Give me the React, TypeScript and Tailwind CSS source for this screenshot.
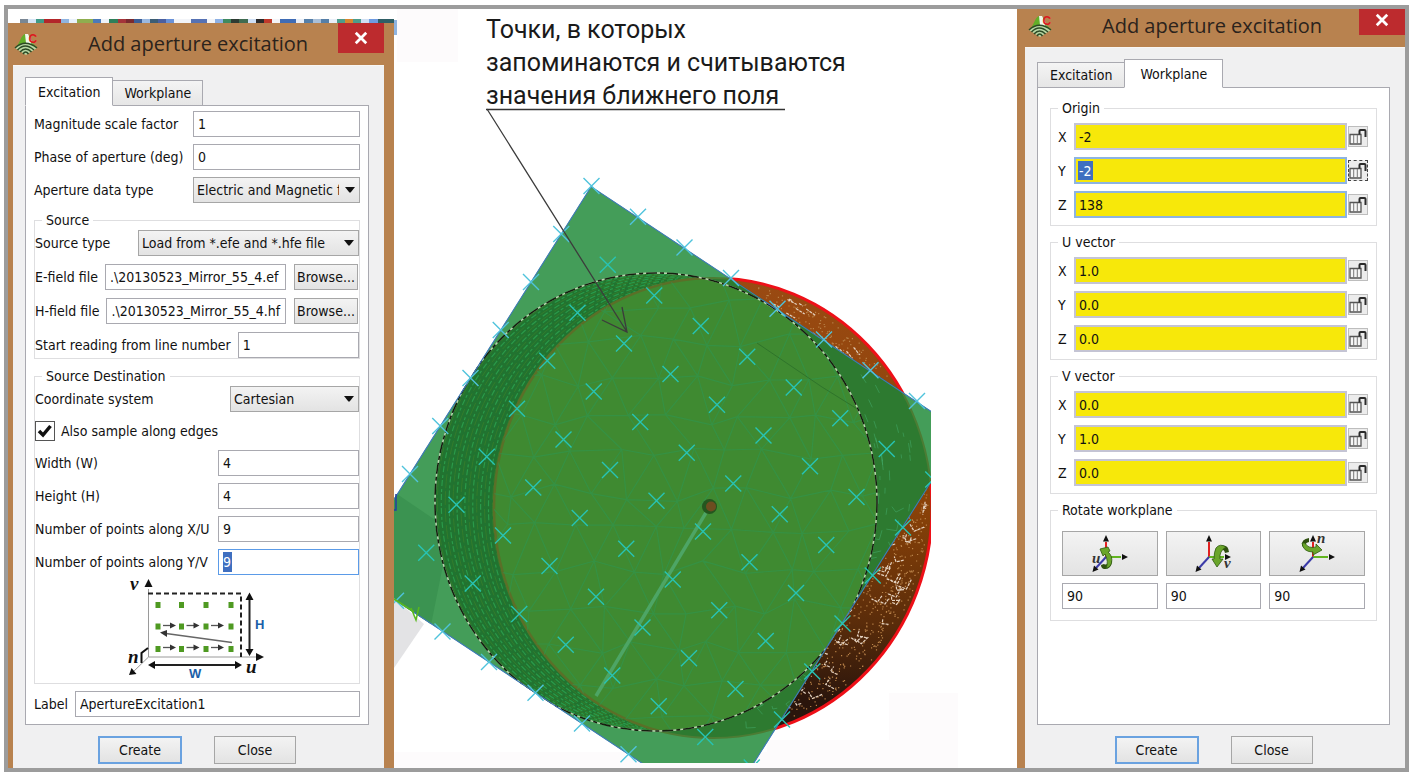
import { clsx } from "clsx";
import React, { useId } from "react";

const fieldBase =
  "h-[26px] min-w-0 border pl-1 text-sm outline-none";
const buttonBase =
  "border border-[#a6a6a6] bg-linear-to-b from-[#f3f3f3] to-[#e3e3e3] text-[#111]";

/* ---------- small building blocks ---------- */

type RowProps = {
  label: string;
  labelClass?: string;
  value: string;
  selected?: boolean;
  after?: React.ReactNode;
};

function TextRow({ label, labelClass, value, selected, after }: RowProps) {
  const id = useId();
  return (
    <div className="flex items-center">
      <label
        htmlFor={id}
        className={clsx("shrink-0 whitespace-nowrap", labelClass)}
      >
        {label}
      </label>
      <input
        id={id}
        defaultValue={value}
        className={clsx(
          fieldBase,
          "ml-[7px] flex-1",
          selected
            ? "border-[#5b9be8] bg-white bg-[linear-gradient(#3f6fc0,#3f6fc0)] bg-[length:9px_20px] bg-[position:4px_50%] bg-no-repeat text-white"
            : "border-[#a9a9b0] bg-white text-[#111]",
        )}
      />
      {after}
    </div>
  );
}

type SelectRowProps = {
  label: string;
  labelClass: string;
  options: string[];
};

function SelectRow({ label, labelClass, options }: SelectRowProps) {
  const id = useId();
  return (
    <div className="flex items-center">
      <label htmlFor={id} className={clsx("shrink-0", labelClass)}>
        {label}
      </label>
      <div className="relative ml-[7px] flex min-w-0 flex-1">
        <select
          id={id}
          className={clsx(
            buttonBase,
            "h-[26px] w-full appearance-none pr-5 pl-[3px] outline-none",
          )}
        >
          {options.map((o) => (
            <option key={o}>{o}</option>
          ))}
        </select>
        <svg
          viewBox="0 0 10 6"
          className="pointer-events-none absolute top-[10px] right-[5px] h-[6px] w-[10px]"
        >
          <path d="M0 0H10L5.6 5.6H4.4Z" fill="#111" />
        </svg>
      </div>
    </div>
  );
}

function Group({
  title,
  className,
  children,
}: {
  title: string;
  className?: string;
  children: React.ReactNode;
}) {
  return (
    <fieldset className="min-w-0 border border-[#dedee0]">
      <legend className="ml-[7px] px-1 leading-5">{title}</legend>
      <div className={clsx("flex flex-col", className)}>{children}</div>
    </fieldset>
  );
}

function AppIcon() {
  return (
    <svg viewBox="0 0 24 24" className="h-6 w-6 shrink-0 overflow-visible">
      <path d="M2 15C6 11 7 3 11 2L16 4L16 14Z" fill="#62ae28" />
      <path d="M11 2L14 2L19 12L16 13L12 11Z" fill="#f0f7ec" />
      <path d="M17 10L23 15L18 17Z" fill="#5aa52c" />
      <path d="M1 16Q11 6 23 16L12 23Z" fill="#b9d8a4" />
      <g fill="none" stroke="#2c4a25" strokeWidth="1.500">
        <path d="M1 16Q11 6.500 23 16" />
        <path d="M3.500 18Q11 10 20 18" />
        <path d="M6 20Q11.500 14 17.500 20" />
        <path d="M9 22Q11.500 18 14.500 22" />
      </g>
      <text
        x="14.500"
        y="11"
        fontSize="12"
        fontWeight="700"
        fontFamily="Liberation Sans, sans-serif"
        fill="#dc1a1f"
      >
        C
      </text>
    </svg>
  );
}

type DialogProps = {
  tabs: string[];
  active: number;
  className?: string;
  headerClass?: string;
  children: React.ReactNode;
};

function ApertureDialog({
  tabs,
  active,
  className,
  headerClass,
  children,
}: DialogProps) {
  return (
    <section className={clsx("flex flex-1 flex-col bg-[#b8824f]", className)}>
      <header
        className={clsx("flex h-[42px] shrink-0 items-center", headerClass)}
      >
        <AppIcon />
        <h2 className="ml-[50px] flex-1 font-['Open_Sans','Noto_Sans',sans-serif] text-xl whitespace-nowrap text-[#2b231c]">
          Add aperture excitation
        </h2>
        <button
          aria-label="Close"
          className="flex h-[30px] w-[46px] items-center justify-center self-start bg-[#bd2b2e]"
        >
          <svg viewBox="0 0 12 12" className="h-[14px] w-[14px]">
            <path
              d="M1.500 1.500L10.500 10.500M10.500 1.500L1.500 10.500"
              stroke="#fff"
              strokeWidth="2.400"
            />
          </svg>
        </button>
      </header>

      <div className="flex flex-1 flex-col border-t border-[#f8f6f4] bg-[#f0f0f1] pt-[11px] pr-[15px] pl-3">
        <div role="tablist" className="flex h-7 items-end">
          {tabs.map((tab, i) => (
            <button
              key={tab}
              role="tab"
              aria-selected={i === active}
              className={clsx(
                "-mb-px border border-[#a9a9b0]",
                i === active
                  ? "relative z-10 h-[29px] border-b-white bg-white"
                  : "h-[26px] bg-linear-to-b from-[#f4f4f4] to-[#e6e6e6]",
                i > 0 && i === active && "px-[15px]",
                i === 0 && "px-3",
                i < active && "border-r-0",
                i > active && "border-l-0 px-[11px]",
              )}
            >
              {tab}
            </button>
          ))}
        </div>
        <div className="flex flex-1 flex-col border border-[#a9a9b0] bg-white">
          {children}
        </div>
        <footer className="flex justify-center gap-8 pt-[11px] pb-1">
          <button className="h-7 w-[84px] border-2 border-[#6aa2e0] bg-linear-to-b from-[#f3f3f3] to-[#e3e3e3]">
            Create
          </button>
          <button className={clsx(buttonBase, "h-7 w-[82px]")}>Close</button>
        </footer>
      </div>
    </section>
  );
}

/* ---------- left dialog ---------- */

// the order in which sample points are read over the aperture
function ApertureDiagram() {
  const cols = [158, 181.5, 206, 231];
  return (
    <svg viewBox="61 576 272 108" className="h-[108px] w-full overflow-visible">
      <g stroke="#9a9a9a" strokeWidth="1" fill="none">
        <path d="M148.500 590V658H262M148.500 658L132 674" />
      </g>
      <path
        d="M148.500 580L152.500 588H144.500ZM264 658L256 654V662ZM129 676L131.500 669L136.500 675Z"
        fill="#111"
      />
      <path
        d="M148 594.500H241V658"
        fill="none"
        stroke="#222"
        strokeWidth="2"
        strokeDasharray="5 3"
      />
      {[606, 627.5, 650].map((y) =>
        cols.map((x) => (
          <rect
            key={`${x}-${y}`}
            x={x - 2.5}
            y={y - 3}
            width="5"
            height="6"
            fill="#4f9a22"
          />
        )),
      )}
      {[626.5, 648.5].map((y) =>
        cols.slice(0, 3).map((x) => (
          <g key={`${x}-${y}`}>
            <path d={`M${x + 5} ${y}h9`} stroke="#555" strokeWidth="1.300" />
            <path d={`M${x + 18} ${y}l-6 -3v6Z`} fill="#333" />
          </g>
        )),
      )}
      <path d="M232 643.500L166 634.500" stroke="#666" strokeWidth="1.400" />
      <path d="M160 633.500L167 631V638Z" fill="#333" />
      <path d="M249.500 598V653M152 666H238" stroke="#222" strokeWidth="2" />
      <path
        d="M249.500 593.500L253.500 601H245.500ZM249.500 657L253.500 650H245.500ZM148 666L155 662V670ZM242 666L235 662V670Z"
        fill="#111"
      />
      <path
        d="M148 649L141.500 654V664"
        fill="none"
        stroke="#111"
        strokeWidth="2"
      />
      <g
        fontFamily="Liberation Serif, serif"
        fontStyle="italic"
        fontWeight="700"
        fontSize="19"
        fill="#111"
      >
        <text x="130" y="591">v</text>
        <text x="128" y="664">n</text>
        <text x="246" y="674">u</text>
      </g>
      <g
        fontFamily="Liberation Sans, sans-serif"
        fontWeight="700"
        fontSize="13"
        fill="#1b5fa8"
      >
        <text x="255" y="630">H</text>
        <text x="189" y="679">W</text>
      </g>
    </svg>
  );
}

function BrowseButton() {
  return (
    <button className={clsx(buttonBase, "mr-px ml-2 h-[26px] w-16 shrink-0")}>
      Browse...
    </button>
  );
}

function ExcitationForm() {
  return (
    <div className="flex flex-col gap-[7px] px-2 pt-[5px]">
      <TextRow label="Magnitude scale factor" labelClass="w-[152px]" value="1" />
      <TextRow label="Phase of aperture (deg)" labelClass="w-[152px]" value="0" />
      <SelectRow
        label="Aperture data type"
        labelClass="w-[152px]"
        options={["Electric and Magnetic fields", "Electric fields"]}
      />

      <Group title="Source" className="gap-2">
        <SelectRow
          label="Source type"
          labelClass="w-[96px]"
          options={["Load from *.efe and *.hfe file"]}
        />
        <TextRow
          label="E-field file"
          value=".\20130523_Mirror_55_4.ef"
          after={<BrowseButton />}
        />
        <TextRow
          label="H-field file"
          value=".\20130523_Mirror_55_4.hf"
          after={<BrowseButton />}
        />
        <TextRow label="Start reading from line number" value="1" />
      </Group>

      <Group title="Source Destination" className="gap-[7px]">
        <SelectRow
          label="Coordinate system"
          labelClass="w-[188px]"
          options={["Cartesian", "Cylindrical", "Spherical"]}
        />
        <label className="flex h-6 items-center gap-[6px]">
          <span className="relative flex">
            <input
              type="checkbox"
              defaultChecked
              className="peer h-5 w-5 appearance-none border border-[#555] bg-white"
            />
            <svg
              viewBox="0 0 20 20"
              className="pointer-events-none absolute inset-0 hidden h-5 w-5 peer-checked:block"
            >
              <path
                d="M4 10L8 14L15.500 5"
                fill="none"
                stroke="#111"
                strokeWidth="3.500"
              />
            </svg>
          </span>
          Also sample along edges
        </label>
        <TextRow label="Width (W)" labelClass="w-[176px]" value="4" />
        <TextRow label="Height (H)" labelClass="w-[176px]" value="4" />
        <TextRow
          label="Number of points along X/U"
          labelClass="w-[176px]"
          value="9"
        />
        <TextRow
          label="Number of points along Y/V"
          labelClass="w-[176px]"
          value="9"
          selected
        />
        <div className="-mt-[7px]">
          <ApertureDiagram />
        </div>
      </Group>

      <TextRow label="Label" value="ApertureExcitation1" />
    </div>
  );
}

const stripColors = [
  "#7a8794", "#d5e4f5", "#3f9a86", "#b3262a", "#b3262a", "#8fb4e0", "#e8f0fa",
  "#8fae4f", "#8fae4f", "#4b79b8", "#eef3fa", "#2e7f5a", "#a4343a", "#7a2a30",
  "#3c5d94", "#9ab8e0", "#3c5d74", "#4a5fa0", "#6a92d8", "#f2f4f8", "#f2f4f8",
  "#5672b4", "#5672b4", "#f2f4f8", "#8db0e4", "#3f8a60", "#2d3b33", "#3f6b50",
  "#cfdff4", "#2b2b2b", "#c0392b", "#f2f4f8", "#3f6cb5", "#3f6cb5", "#e8eef8",
  "#567fa8", "#a9bfd8", "#567fa8", "#e8eef8", "#4d9c8c", "#d9862e", "#4d9c8c",
  "#cfdff4", "#6f9be0", "#2f5f66", "#2f5f66",
];

// bottom edge of the toolbar that shows above the window
function ToolbarStrip() {
  return (
    <div className="flex h-[14px] items-end pl-3">
      {stripColors.map((c, i) => (
        <span key={i} className="h-1 flex-1" style={{ backgroundColor: c }} />
      ))}
    </div>
  );
}

/* ---------- right dialog ---------- */

function LockIcon() {
  return (
    <svg viewBox="0 0 18 19" className="h-full w-full">
      <path
        d="M1 7.500H12V17H1Z"
        fill="#f6f6f6"
        stroke="#555"
        strokeWidth="1.300"
      />
      <path d="M4.700 8V17M8.300 8V17" stroke="#777" strokeWidth="1" />
      <path
        d="M10.500 7.500V4Q10.500 3 11.500 3H15.500Q16.500 3 16.500 4V10"
        fill="none"
        stroke="#2b2b2b"
        strokeWidth="2"
      />
    </svg>
  );
}

type AxisRowProps = {
  group: string;
  axis: string;
  value: string;
  focused?: boolean;
  blue?: boolean;
};

function AxisRow({ group, axis, value, focused, blue }: AxisRowProps) {
  const id = useId();
  return (
    <div className="flex items-center">
      <label htmlFor={id} className="w-4 shrink-0">
        {axis}
      </label>
      <input
        id={id}
        defaultValue={value}
        className={clsx(
          "h-[27px] min-w-0 flex-1 border-2 bg-[#f7e80a] pl-[3px] text-sm outline-none",
          blue ? "border-[#8db4e2]" : "border-[#c4c4d4]",
          focused
            ? "bg-[linear-gradient(#3f6fc0,#3f6fc0)] bg-[length:15px_19px] bg-[position:2px_50%] bg-no-repeat text-white"
            : "text-[#111]",
        )}
      />
      <button
        aria-label={`Lock ${group} ${axis}`}
        className={clsx(
          "mx-px h-[21px] w-5 shrink-0 border bg-[#ececec]",
          focused ? "border-dashed border-[#444]" : "border-[#bdbdbd]",
        )}
      >
        <LockIcon />
      </button>
    </div>
  );
}

const vectors = [
  { title: "Origin", values: ["-2", "-2", "138"], focus: 1 },
  { title: "U vector", values: ["1.0", "0.0", "0.0"], focus: -1 },
  { title: "V vector", values: ["0.0", "1.0", "0.0"], focus: -1 },
];

const green = { fill: "#6aa52a", stroke: "#2f5a10", strokeWidth: 0.8 };

function RotateIcon({ axis }: { axis: string }) {
  return (
    <svg viewBox="0 0 36 40" className="h-10 w-9 overflow-visible">
      <path d="M14 23V8" stroke="#e02020" strokeWidth="2" />
      <path d="M14 23H29" stroke="#62b520" strokeWidth="2" />
      <path d="M14 23L4 34" stroke="#3b3ba8" strokeWidth="2" />
      <path
        d="M14 1L17 7.500H11ZM36 23L30 20V26ZM0.500 38L2 31.500L6.500 35.500Z"
        fill="#111"
      />
      {axis === "u" && (
        <>
          <path d="M9 31L12 30Q15 32 17 27L20 27Q19 36 12 35Q9 34 9 31Z" fill="#2f4f10" />
          <path
            d="M8 15L16 13L18 17L16 18Q21 22 19.500 29Q18 34 14 34Q17 28 13 20L11 22Z"
            {...green}
          />
        </>
      )}
      {axis === "v" && (
        <>
          <path d="M26 12Q33 10 34 18L30 19Q29 15 26 16Z" fill="#2f4f10" />
          <path
            d="M31 13Q25 9 21 14Q19 18 19 25H17L22 33L28 25H25Q24 17 31 13Z"
            {...green}
          />
        </>
      )}
      {axis === "n" && (
        <>
          <path d="M10 4Q2 5 3 12L7 14Q5 9 10 8Z" fill="#2f4f10" />
          <path d="M3 9Q4 18 14 18V21L23 16L17 10V13Q9 15 6 9Z" {...green} />
        </>
      )}
      <text
        x={axis === "u" ? 0 : axis === "v" ? 29 : 18}
        y={axis === "u" ? 29 : axis === "v" ? 34 : 9}
        fontFamily="Liberation Serif, serif"
        fontStyle="italic"
        fontWeight="700"
        fontSize="15"
        fill="#333"
      >
        {axis}
      </text>
    </svg>
  );
}

function WorkplaneForm() {
  return (
    <div className="flex flex-col gap-[6px] px-3 pt-[10px]">
      {vectors.map(({ title, values, focus }) => (
        <Group
          key={title}
          title={title}
          className="gap-[7px] px-[7px] pt-[5px] pb-[7px]"
        >
          {values.map((v, i) => (
            <AxisRow
              key={i}
              group={title}
              axis={"XYZ"[i]}
              value={v}
              focused={i === focus}
              blue={focus > 0 && i >= focus}
            />
          ))}
        </Group>
      ))}

      <Group title="Rotate workplane" className="px-[11px] pt-[11px] pb-[11px]">
        <div className="grid grid-cols-3 gap-2">
          {["u", "v", "n"].map((axis) => (
            <div key={axis} className="flex flex-col gap-[7px]">
              <button
                aria-label={`Rotate around ${axis}`}
                className={clsx(
                  buttonBase,
                  "flex h-[45px] items-center justify-center",
                )}
              >
                <RotateIcon axis={axis} />
              </button>
              <input
                aria-label={`Angle around ${axis}`}
                defaultValue="90"
                className={clsx(
                  fieldBase,
                  "w-full border-[#a9a9b0] bg-white text-[#111]",
                )}
              />
            </div>
          ))}
        </div>
      </Group>
    </div>
  );
}

/* ---------- 3D view ---------- */

// small seeded generator, keeps the mesh the same on every render
function makeRandom(seed: number) {
  let s = seed;
  return () => {
    s = (s * 16807) % 2147483647;
    return s / 2147483647;
  };
}

const front = { cx: 656, cy: 502, rx: 221, ry: 229 };
const back = { cx: 713, cy: 508, rx: 219, ry: 230 };
const plane = "591,186 963,432 721,816 349,570";

const samples: { x: number; y: number }[] = [];
for (let i = 0; i < 9; i++) {
  for (let j = 0; j < 9; j++) {
    samples.push({ x: 591.5 + i * 46.5 - j * 30.25, y: 186 + i * 30.7 + j * 48 });
  }
}

function buildMesh() {
  const rnd = makeRandom(42);
  const step = 38;
  const pts: number[][][] = [];
  for (let r = 0; r < 14; r++) {
    const row: number[][] = [];
    for (let c = 0; c < 13; c++) {
      row.push([
        480 + c * step + (r % 2) * 19 + (rnd() - 0.5) * 18,
        265 + r * step + (rnd() - 0.5) * 18,
      ]);
    }
    pts.push(row);
  }
  let d = "";
  const seg = (a: number[], b?: number[]) => {
    if (b) {
      d += `M${a[0].toFixed(1)} ${a[1].toFixed(1)}L${b[0].toFixed(1)} ${b[1].toFixed(1)}`;
    }
  };
  for (let r = 0; r < 14; r++) {
    for (let c = 0; c < 13; c++) {
      seg(pts[r][c], pts[r][c + 1]);
      seg(pts[r][c], pts[r + 1]?.[c]);
      if (rnd() > 0.25) seg(pts[r][c], pts[r + 1]?.[r % 2 ? c + 1 : c - 1]);
    }
  }
  return d;
}

// dots and thin broken streaks on the outer wall of the reflector
function buildSpecks() {
  const rnd = makeRandom(7);
  let dots = "";
  let streaks = "";
  for (let n = 0; n < 1300; n++) {
    const a = -1.6 + rnd() * 3.1;
    const k = 0.76 + rnd() * 0.22;
    const x = back.cx + back.rx * k * Math.cos(a);
    const y = back.cy + back.ry * k * Math.sin(a);
    if (n % 11 === 0) {
      // upper wall follows the rim, lower wall branches
      const len = 4 + rnd() * 7;
      const t = a + Math.PI / 2 + (a > 0 && rnd() > 0.5 ? 1.1 : 0.15);
      const dx = Math.cos(t) * len;
      const dy = Math.sin(t) * len;
      streaks += `M${x.toFixed(1)} ${y.toFixed(1)}l${dx.toFixed(1)} ${dy.toFixed(1)}`;
      if (a > 0) streaks += `l${(-dy).toFixed(1)} ${(dx * 0.7).toFixed(1)}`;
    } else {
      dots += `M${x.toFixed(1)} ${y.toFixed(1)}h1.200`;
    }
  }
  return { dots, streaks };
}

const mesh = buildMesh();
const specks = buildSpecks();
const ridges = Array.from({ length: 15 }, (_, i) => (i + 0.6) / 15);

function FieldView() {
  return (
    <svg
      viewBox="394 9 623 759"
      preserveAspectRatio="xMinYMin meet"
      className="absolute inset-0 h-full w-full"
    >
      <defs>
        <clipPath id="view">
          <rect x="394" y="9" width="537" height="754" />
        </clipPath>
        <clipPath id="plane">
          <polygon points={plane} />
        </clipPath>
        <clipPath id="front">
          <ellipse {...front} />
        </clipPath>
        <clipPath id="back">
          <ellipse {...back} />
        </clipPath>
        <linearGradient id="brown" x1="0" y1="0" x2="0" y2="1">
          <stop offset="0" stopColor="#9a4a12" />
          <stop offset="0.5" stopColor="#8a4208" />
          <stop offset="0.75" stopColor="#5a2c0a" />
          <stop offset="0.92" stopColor="#2a150c" />
        </linearGradient>
      </defs>

      {/* faint page patches and the shadow beside the plane */}
      <g fill="#fdfbfc">
        <rect x="397" y="9" width="61" height="53" />
        <rect x="394" y="752" width="373" height="16" />
        <rect x="767" y="740" width="191" height="28" />
        <rect x="889" y="693" width="69" height="50" />
      </g>
      <polygon points="394,598 424,624 394,668" fill="#e3e3e5" />
      <path d="M394 20H397V35H394Z" fill="#8fb4e0" />

      <g clipPath="url(#view)">
        {/* reflector seen past the plane */}
        <ellipse {...back} fill="url(#brown)" />
        <path
          d={specks.dots}
          stroke="#b98248"
          strokeWidth="1.200"
          clipPath="url(#back)"
        />
        <path
          d={specks.streaks}
          stroke="#e4d2c0"
          strokeWidth="1.200"
          strokeDasharray="3 1"
          fill="none"
          clipPath="url(#back)"
        />
        <ellipse {...back} fill="none" stroke="#ee1018" strokeWidth="3" />

        {/* everything covered by the sampling plane */}
        <g clipPath="url(#plane)">
          <polygon points={plane} fill="#449d59" />
          <polygon points="394,492 450,530 431,625 394,600" fill="#3b9351" />
          <ellipse {...back} fill="#2d7a30" stroke="#4c7c34" strokeWidth="2" />
          <g clipPath="url(#back)" opacity="0.500">
            <path
              d={specks.streaks}
              stroke="#45b070"
              strokeWidth="1"
              fill="none"
            />
          </g>
          <ellipse {...front} fill="#217330" />
          <g clipPath="url(#front)" fill="none">
            {ridges.map((t, i) => (
              <ellipse
                key={t}
                cx={front.cx + (back.cx - front.cx) * t}
                cy={front.cy + (back.cy - front.cy) * t}
                rx={front.rx - 2 * t}
                ry={front.ry}
                stroke={i % 2 ? "#2a9a4a" : "#347c2c"}
                strokeWidth={i % 2 ? 1.2 : 1}
                strokeDasharray={i % 2 ? "6 2 3 3" : "14 3"}
                strokeDashoffset={i * 5}
              />
            ))}
            <ellipse
              {...back}
              fill="#3f8a31"
              stroke="#5b6f28"
              strokeWidth="2.500"
            />
            <g clipPath="url(#back)">
              <path d={mesh} stroke="#2f9650" strokeWidth="1.200" opacity="0.600" />
            </g>
            <path
              d="M757 343L822 387L875 420"
              stroke="#2f742b"
              strokeWidth="1"
            />
          </g>
          <ellipse
            {...front}
            fill="none"
            stroke="#b9d3ae"
            strokeWidth="1.500"
          />
          <ellipse
            {...front}
            fill="none"
            stroke="#14200f"
            strokeWidth="1.600"
            strokeDasharray="11 3 4 3"
          />
          <polygon
            points={plane}
            fill="none"
            stroke="#3f78c0"
            strokeWidth="2"
          />
        </g>

        <path d="M710 506L596 696" stroke="#4da565" strokeWidth="3.500" />
        <circle cx="709.500" cy="506.500" r="7.500" fill="#24561f" />
        <circle cx="711" cy="506.500" r="5" fill="#6d4d20" />

        <g strokeWidth="1.400" fill="none">
          {samples.map(({ x, y }, i) => (
            <path
              key={i}
              d={`M${x - 8} ${y - 8}l16 16M${x + 8} ${y - 8}l-16 16`}
              stroke={
                i < 9 || i % 9 === 0 || i % 9 === 8 ? "#4fc3dc" : "#28c4b4"
              }
            />
          ))}
        </g>
        <path d="M396 494V510H394" fill="none" stroke="#2340a0" strokeWidth="1.500" />
        <path
          d="M394 599L414 612M411 608L416 620L419 607"
          fill="none"
          stroke="#58b81c"
          strokeWidth="1.500"
        />
      </g>

      {/* leader line of the caption */}
      <path d="M486 109.500H785" stroke="#333" strokeWidth="1.400" />
      <path
        d="M487 109L627 332M602 320L627 332L622 307"
        fill="none"
        stroke="#3c3c3c"
        strokeWidth="1.300"
      />
    </svg>
  );
}

export default function App() {
  return (
    <div className="flex min-h-screen flex-col bg-white px-1 pt-[5px] pb-1 font-['DejaVu_Sans_Condensed','DejaVu_Sans',sans-serif] text-sm text-[#111]">
      <main className="grid flex-1 grid-cols-[minmax(386px,386fr)_minmax(0,623fr)_minmax(388px,388fr)] border-4 border-[#9c9c9c]">
        <div className="flex flex-col">
          <ToolbarStrip />
          <ApertureDialog
            tabs={["Excitation", "Workplane"]}
            active={0}
            className="pr-[10px] pl-[5px]"
            headerClass="pl-px"
          >
            <ExcitationForm />
          </ApertureDialog>
        </div>

        <figure className="relative">
          <FieldView />
          <figcaption className="relative pt-1 pl-[92px] font-['Roboto','Liberation_Sans',sans-serif] text-[25px] leading-[33px] whitespace-nowrap text-[#1a1a1a]">
            Точки, в которых
            <br />
            запоминаются и считываются
            <br />
            значения ближнего поля
          </figcaption>
        </figure>

        <div className="flex flex-col overflow-hidden">
          <ApertureDialog
            tabs={["Excitation", "Workplane"]}
            active={1}
            className="-mt-1 pl-2"
            headerClass="pl-[3px]"
          >
            <WorkplaneForm />
          </ApertureDialog>
        </div>
      </main>
    </div>
  );
}
